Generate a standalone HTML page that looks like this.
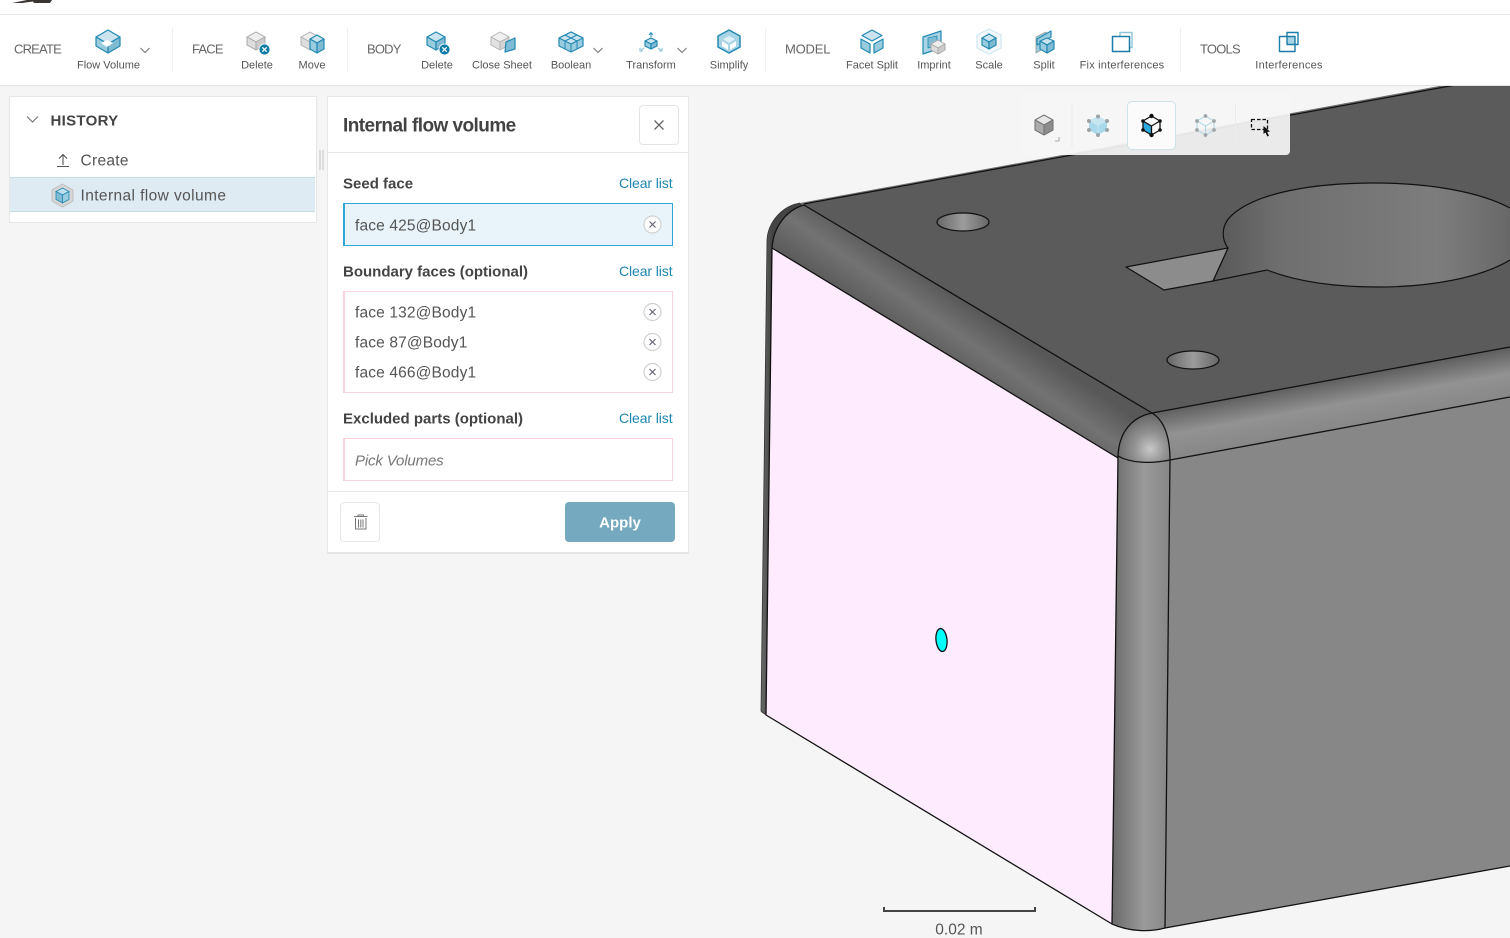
<!DOCTYPE html>
<html><head><meta charset="utf-8"><title>Internal flow volume</title>
<style>
html,body{margin:0;padding:0;width:1510px;height:938px;overflow:hidden;background:#f5f5f5;font-family:"Liberation Sans",sans-serif;color:#555}
.t{position:absolute;white-space:nowrap;line-height:1;transform:translateY(-50%)}
.c{transform:translate(-50%,-50%)}
.r{transform:translate(-100%,-50%)}
.lab{font-size:13px;color:#666;letter-spacing:-.8px}
.sm{font-size:11px;color:#555}
.box{position:absolute;box-sizing:border-box;background:#fff}
.head{font-size:15px;font-weight:bold;color:#444}
.clear{font-size:14px;color:#1e86b0;letter-spacing:-.1px}
.item{font-size:15.5px;color:#555;letter-spacing:.15px}
svg{position:absolute;left:0;top:0}
</style></head><body>

<!-- 3D model -->
<svg width="1510" height="938" viewBox="0 0 1510 938">
<defs>
<linearGradient id="gl" gradientUnits="userSpaceOnUse" x1="978" y1="310" x2="942" y2="362"><stop offset="0" stop-color="#585858"/><stop offset=".5" stop-color="#737373"/><stop offset="1" stop-color="#5c5c5c"/></linearGradient>
<linearGradient id="gr" gradientUnits="userSpaceOnUse" x1="1340" y1="378" x2="1349" y2="428"><stop offset="0" stop-color="#5e5e5e"/><stop offset=".5" stop-color="#929292"/><stop offset="1" stop-color="#878787"/></linearGradient>
<linearGradient id="gv" gradientUnits="userSpaceOnUse" x1="1114" y1="0" x2="1168" y2="0"><stop offset="0" stop-color="#6d6d6d"/><stop offset=".55" stop-color="#9a9a9a"/><stop offset="1" stop-color="#878787"/></linearGradient>
<radialGradient id="gs" gradientUnits="userSpaceOnUse" cx="1150" cy="449" r="34"><stop offset="0" stop-color="#c8c8c8"/><stop offset=".45" stop-color="#949494"/><stop offset="1" stop-color="#686868"/></radialGradient>
<linearGradient id="gh" gradientUnits="userSpaceOnUse" x1="1223" y1="0" x2="1510" y2="0"><stop offset="0" stop-color="#5b5b5b"/><stop offset=".2" stop-color="#6f6f6f"/><stop offset=".75" stop-color="#7d7d7d"/><stop offset="1" stop-color="#686868"/></linearGradient>
<linearGradient id="h1" x1="0" y1="0" x2="1" y2="0"><stop offset="0" stop-color="#666"/><stop offset=".5" stop-color="#9c9c9c"/><stop offset="1" stop-color="#666"/></linearGradient>
<linearGradient id="gs2" gradientUnits="userSpaceOnUse" x1="761" y1="0" x2="772" y2="0"><stop offset="0" stop-color="#6a6a6a"/><stop offset="1" stop-color="#444"/></linearGradient>
</defs>
<!-- silhouette back strip -->
<path d="M800 203 C782 206 768 222 767 240 L761 712 L767 716 L772 248 C773 228 786 210 804 205 Z" fill="url(#gs2)"/>
<path d="M800 203 L1450 84 L1510 73 L1510 90 L804 207 Z" fill="#6e6e6e"/>
<!-- top face -->
<polygon points="804,205 1450,86 1510,75 1510,347 1152,413" fill="#5b5b5b"/>
<!-- left fillet band -->
<path d="M804 205 L1152 413 C1135 417 1120 432 1118 458 L772 248 C773 228 786 210 804 205 Z" fill="url(#gl)"/>
<!-- pink face -->
<polygon points="772,248 1118,458 1112,924 766,715" fill="#feebfe"/>
<!-- right face -->
<polygon points="1170,460 1510,397 1510,866 1165,928" fill="#878787"/>
<!-- right fillet band -->
<path d="M1152 413 L1510 347 L1510 397 L1170 460 C1170 440 1165 420 1152 413 Z" fill="url(#gr)"/>
<!-- vertical fillet -->
<path d="M1118 456 C1130 463 1150 464 1170 460 L1165 928 C1150 932 1130 932 1112 923 Z" fill="url(#gv)"/>
<!-- corner sphere -->
<path d="M1152 413 C1132 417 1119 432 1118 456 C1130 463 1150 464 1170 460 C1170 438 1165 421 1152 413 Z" fill="url(#gs)"/>
<!-- big hole -->
<path d="M1228 248 C1222 240 1220 226 1232 215 C1258 192 1315 183 1375 183 C1430 183 1480 192 1510 208 L1510 260 C1480 278 1430 287 1378 287 C1340 287 1300 283 1267 270 L1213 281 Z" fill="url(#gh)"/>
<path d="M1510 208 C1480 192 1430 183 1375 183 C1315 183 1258 192 1232 215 C1220 226 1222 240 1228 248 L1213 281 M1213 281 L1267 270 C1300 283 1340 287 1378 287 C1430 287 1480 278 1510 260" fill="none" stroke="#111" stroke-width="1.2"/>
<!-- notch -->
<polygon points="1126,267 1228,248 1213,281 1164,290" fill="#8c8c8c" stroke="#111" stroke-width="1.2" stroke-linejoin="round"/>
<!-- small holes -->
<ellipse cx="963" cy="222" rx="26" ry="9" fill="url(#h1)" stroke="#111" stroke-width="1.2"/>
<ellipse cx="1193" cy="360" rx="26" ry="9" fill="url(#h1)" stroke="#111" stroke-width="1.2"/>
<!-- edges -->
<g fill="none" stroke="#111" stroke-width="1.3" stroke-linejoin="round">
<path d="M804 204 L1450 86 L1510 75"/>
<path d="M804 205 L1152 413 L1510 347"/>
<path d="M772 248 L1118 458"/>
<path d="M772 248 C773 228 786 210 804 205"/>
<path d="M772 248 L766 715 L1112 924"/>
<path d="M766 715 L761 711 L767 240 C768 222 782 206 800 203" stroke-width=".8" stroke="#333"/>
<path d="M1152 413 C1132 417 1119 432 1118 456 C1130 463 1150 464 1170 460 C1170 438 1165 421 1152 413"/>
<path d="M1118 456 L1112 924 C1130 932 1150 932 1165 928 L1170 460 L1510 397"/>
<path d="M1165 928 L1510 866"/>
</g>
<ellipse cx="941.500" cy="640" rx="5.500" ry="11.500" transform="rotate(-6 941.500 640)" fill="#00ffff" stroke="#111" stroke-width="1.300"/>
</svg>

<!-- scale -->
<div class="box" style="left:883px;top:910px;width:153px;height:2px;background:#444"></div>
<div class="box" style="left:883px;top:907px;width:2px;height:5px;background:#444"></div>
<div class="box" style="left:1034px;top:907px;width:2px;height:5px;background:#444"></div>
<span class="t c" style="left:959px;top:929.500px;font-size:15.500px;color:#555">0.02 m</span>

<!-- viewer toolbar -->
<div class="box" style="left:1022px;top:92px;width:268px;height:63px;background:rgba(245,245,245,.93);border-radius:0 0 4px 4px"></div>
<div class="box" style="left:1127px;top:101px;width:49px;height:49px;background:#fbfbfb;border:1px solid #cfe2ea;border-radius:5px"></div>
<svg width="1510" height="938" viewBox="0 0 1510 938">
<path d="M1072 104V148M1235.500 104V148" stroke="#ececec" stroke-width="1"/>
<g stroke-linejoin="round">
<polygon points="1044,115 1053,120 1044,125 1035,120" fill="#e6e6e6" stroke="#777" stroke-width="1.100"/>
<polygon points="1035,120 1044,125 1044,135 1035,130" fill="#ababab" stroke="#777" stroke-width="1.100"/>
<polygon points="1053,120 1044,125 1044,135 1053,130" fill="#8d8d8d" stroke="#777" stroke-width="1.100"/>
<path d="M1055 141H1059V137" fill="none" stroke="#aaa"/>
<polygon points="1098,116 1107,121 1107,130 1098,135 1089,130 1089,121" fill="#a9d8ea"/>
<polygon points="1098,116 1107,121 1098,126 1089,121" fill="#c6e6f2"/>
<path d="M1098 126V135" stroke="#d5edf6" stroke-width=".8"/>
<g fill="#9aa4a8"><circle cx="1098" cy="116.500" r="2"/><circle cx="1107" cy="121" r="2"/><circle cx="1107" cy="130" r="2"/><circle cx="1098" cy="135" r="2"/><circle cx="1089" cy="130" r="2"/><circle cx="1089" cy="121" r="2"/></g>
<polygon points="1143,121 1151.500,126 1151.500,135 1143,130" fill="#2ba8dc"/>
<polygon points="1151.500,116 1160,121 1160,130 1151.500,135 1143,130 1143,121" fill="none" stroke="#111" stroke-width="1.300"/>
<path d="M1143 121L1151.500 126L1160 121M1151.500 126V135" fill="none" stroke="#111" stroke-width="1.300"/>
<g fill="#111"><circle cx="1151.500" cy="116" r="2.200"/><circle cx="1160" cy="121" r="1.800"/><circle cx="1160" cy="130" r="1.800"/><circle cx="1151.500" cy="135" r="2.200"/><circle cx="1143" cy="130" r="1.800"/><circle cx="1143" cy="121" r="1.800"/></g>
<polygon points="1205.500,116 1214,121 1214,130 1205.500,135 1197,130 1197,121" fill="none" stroke="#a9d4e4" stroke-width="1"/>
<path d="M1197 121L1205.500 126L1214 121M1205.500 126V135" fill="none" stroke="#a9d4e4"/>
<g fill="#a0a6a8"><circle cx="1205.500" cy="116" r="1.900"/><circle cx="1214" cy="121" r="1.900"/><circle cx="1214" cy="130" r="1.900"/><circle cx="1205.500" cy="135" r="1.900"/><circle cx="1197" cy="130" r="1.900"/><circle cx="1197" cy="121" r="1.900"/></g>
<rect x="1251.500" y="119.500" width="16" height="10" fill="none" stroke="#111" stroke-width="1.300" stroke-dasharray="3.500 2"/>
<path d="M1263.500 126 L1263.500 134 L1265.500 132.500 L1267.300 136.500 L1269 135.800 L1267.200 132 L1270 131.500 Z" fill="#111"/>
</g>
</svg>

<!-- top toolbar -->
<div class="box" style="left:0;top:0;width:1510px;height:86px;background:#fff;border-bottom:1px solid #e2e2e2"></div>
<div class="box" style="left:0;top:14px;width:1510px;height:1px;background:#e6e6e6"></div>
<svg width="1510" height="86" viewBox="0 0 1510 86">
<path d="M12 3 L27 0 H52 L50 3 H34 L33 1.500 L22 3 Z" fill="#3a3532"/>
<path d="M172.500 28V72M347.500 28V72M765.500 28V72M1180.500 28V72" stroke="#efefef"/>
<g fill="none" stroke="#777" stroke-width="1.100"><path d="M140.500 48L145 52.500L149.500 48"/><path d="M593.500 48L598 52.500L602.500 48"/><path d="M677.500 48L682 52.500L686.500 48"/></g>
<g stroke-linejoin="round" stroke-width="1.200" stroke="#2289b2">
<!-- flow volume -->
<polygon points="108,30 120,37 108,44 96,37" fill="#cbe4ef"/>
<polygon points="96,37 108,44 108,53 96,46" fill="#9accdf"/>
<polygon points="120,37 108,44 108,53 120,46" fill="#7fbbd3"/>
<path d="M101 43L107 40L113 43L107 47Z" fill="#fff" stroke="none"/>
<!-- face delete -->
<g stroke="#a8a8a8" stroke-width="1"><polygon points="256,32 265,37 256,42 247,37" fill="#eee"/><polygon points="247,37 256,42 256,50 247,45" fill="#ddd"/><polygon points="265,37 256,42 256,50 265,45" fill="#ccc"/></g>
<circle cx="264.500" cy="49.500" r="5.500" fill="#0c7ba8" stroke="#fff" stroke-width=".8"/><path d="M262.300 47.300L266.700 51.700M266.700 47.300L262.300 51.700" stroke="#fff" stroke-width="1.300"/>
<!-- move -->
<g stroke="#b0b0b0" stroke-width="1"><polygon points="310,32 319,37 310,42 301,37" fill="#eee"/><polygon points="301,37 310,42 310,50 301,45" fill="#ddd"/></g>
<polygon points="317,35 324,39 317,43 310,39" fill="#cbe4ef"/><polygon points="310,39 317,43 317,53 310,49" fill="#9accdf"/><polygon points="324,39 317,43 317,53 324,49" fill="#7fbbd3"/>
<!-- body delete -->
<polygon points="436,32 445,37 436,42 427,37" fill="#cbe4ef"/><polygon points="427,37 436,42 436,50 427,45" fill="#9accdf"/><polygon points="445,37 436,42 436,50 445,45" fill="#7fbbd3"/>
<circle cx="444.500" cy="49.500" r="5.500" fill="#0c7ba8" stroke="#fff" stroke-width=".8"/><path d="M442.300 47.300L446.700 51.700M446.700 47.300L442.300 51.700" stroke="#fff" stroke-width="1.300"/>
<!-- close sheet -->
<g stroke="#b4b4b4" stroke-width="1"><polygon points="500,32 509,37 500,42 491,37" fill="#f0f0f0"/><polygon points="491,37 500,42 500,50 491,45" fill="#e2e2e2"/><polygon points="509,37 500,42 500,50 509,45" fill="#d4d4d4"/></g>
<path d="M506 42 L515 38 L515 49 L505 52 Z" fill="#7fbdd6"/>
<!-- boolean -->
<polygon points="571,32 583,38 583,46 571,52 559,46 559,38" fill="#9accdf"/><polygon points="571,32 583,38 571,44 559,38" fill="#cbe4ef"/><path d="M571 44V52M565 35L577 41V49M577 35L565 41V49" fill="none" stroke-width="1"/>
<!-- transform -->
<polygon points="651,38 657,41 651,44 645,41" fill="#cbe4ef"/><polygon points="645,41 651,44 651,49 645,46" fill="#9accdf"/><polygon points="657,41 651,44 651,49 657,46" fill="#7fbbd3"/>
<path d="M651 37V33M649 35L651 32.500L653 35" fill="none" stroke-width="1"/>
<path d="M644 48L641 50M643 51H640V48M658 48L661 50M659 51H662V48" fill="none" stroke="#7fbdd6" stroke-width="1"/>
<!-- simplify -->
<polygon points="729,30 740,36 740,47 729,53 718,47 718,36" fill="#a9d4e5" stroke-width="1.500"/>
<polygon points="729,36 735,39 729,43 723,39" fill="#dff0f6" stroke="none"/><polygon points="722,41 728,45 728,50 722,46" fill="#fff" stroke="none"/><polygon points="736,41 730,45 730,50 736,46" fill="#fff" stroke="none"/>
<!-- facet split -->
<polygon points="872,30 882,35.500 872,41 862,35.500" fill="#cbe4ef"/><polygon points="861,39 870,44 870,53 861,48" fill="#9accdf"/><polygon points="883,39 874,44 874,53 883,48" fill="#9accdf"/>
<!-- imprint -->
<polygon points="923,37 941,31 941,48 923,54" fill="#a9d4e5"/><polygon points="928,38 937,36 937,45 928,48" fill="#7fbbd3" stroke-width=".8"/>
<g stroke="#aaa" stroke-width="1"><polygon points="938,40 945,44 938,48 931,44" fill="#eee"/><polygon points="931,44 938,48 938,54 931,50" fill="#ddd"/><polygon points="945,44 938,48 938,54 945,50" fill="#ccc"/></g>
<!-- scale -->
<polygon points="989,29 1001,35 1001,48 989,54 977,48 977,35" fill="#f4fafc" stroke="#cfe6ef" stroke-width="1.200"/>
<polygon points="989,34 996,38 989,42 982,38" fill="#cbe4ef"/><polygon points="982,38 989,42 989,49 982,45" fill="#9accdf"/><polygon points="996,38 989,42 989,49 996,45" fill="#7fbbd3"/>
<!-- split -->
<polygon points="1036,37 1046,32 1046,47 1036,53" fill="#9accdf" stroke="#999" stroke-width=".8"/><polygon points="1037,39 1051,31 1051,37 1037,45" fill="#9accdf"/><polygon points="1047,38 1054,41 1047,45 1040,41" fill="#cbe4ef"/><polygon points="1040,41 1047,45 1047,53 1040,49" fill="#9accdf"/><polygon points="1054,41 1047,45 1047,53 1054,49" fill="#7fbbd3"/>
<!-- fix interferences -->
<path d="M1120 36V32.500H1132V47.500H1130" fill="none" stroke="#8fc5da" stroke-width="1.400"/>
<rect x="1112.500" y="36.500" width="17" height="15" fill="#fff" stroke="#1a7ea8" stroke-width="1.500"/>
<!-- interferences -->
<rect x="1287" y="36.500" width="8" height="8" fill="#a9d4e5" stroke="none"/>
<rect x="1279.500" y="36.500" width="15.500" height="15" fill="none" stroke="#1a7ea8" stroke-width="1.400"/>
<rect x="1287" y="32.500" width="11" height="12" fill="none" stroke="#1a7ea8" stroke-width="1.400"/>
</g>
</svg>
<span class="t lab" style="left:14px;top:49px">CREATE</span>
<span class="t lab" style="left:192px;top:49px">FACE</span>
<span class="t lab" style="left:367px;top:49px">BODY</span>
<span class="t lab" style="left:785px;top:49px;letter-spacing:-.2px">MODEL</span>
<span class="t lab" style="left:1200px;top:49px">TOOLS</span>
<span class="t c sm" style="left:108.500px;top:66px">Flow Volume</span>
<span class="t c sm" style="left:257px;top:66px">Delete</span>
<span class="t c sm" style="left:312px;top:66px">Move</span>
<span class="t c sm" style="left:437px;top:66px">Delete</span>
<span class="t c sm" style="left:502px;top:66px">Close Sheet</span>
<span class="t c sm" style="left:571px;top:66px">Boolean</span>
<span class="t c sm" style="left:651px;top:66px">Transform</span>
<span class="t c sm" style="left:729px;top:66px">Simplify</span>
<span class="t c sm" style="left:872px;top:66px">Facet Split</span>
<span class="t c sm" style="left:934px;top:66px">Imprint</span>
<span class="t c sm" style="left:989px;top:66px">Scale</span>
<span class="t c sm" style="left:1044px;top:66px">Split</span>
<span class="t c sm" style="left:1122px;top:66px;letter-spacing:.2px">Fix interferences</span>
<span class="t c sm" style="left:1289px;top:66px;letter-spacing:.25px">Interferences</span>

<!-- history panel -->
<div class="box" style="left:9px;top:96px;width:308px;height:127px;border:1px solid #e6e6e6"></div>
<div class="box" style="left:10px;top:177px;width:305px;height:35px;background:#deebf3;border-top:1px solid #c6dce7;border-bottom:1px solid #c6dce7"></div>
<div class="box" style="left:319px;top:150px;width:1.500px;height:20px;background:#ddd"></div>
<div class="box" style="left:322px;top:150px;width:1.500px;height:20px;background:#ddd"></div>
<svg width="340" height="230" viewBox="0 0 340 230">
<path d="M27 116.500L32.500 122L38 116.500" fill="none" stroke="#777" stroke-width="1.200"/>
<path d="M63 165V155M59 158.500L63 154.500L67 158.500M57 166.500H69" fill="none" stroke="#555" stroke-width="1.100"/>
<polygon points="62.500,184 73,190 73,201 62.500,207 52,201 52,190" fill="#d6d6d6" stroke="#bdbdbd"/>
<polygon points="62.500,188 69,191.500 62.500,195 56,191.500" fill="#bfe0ee" stroke="#2289b2" stroke-width=".8"/>
<polygon points="56,191.500 62.500,195 62.500,203 56,199.500" fill="#7fbbd3" stroke="#2289b2" stroke-width=".8"/>
<polygon points="69,191.500 62.500,195 62.500,203 69,199.500" fill="#9accdf" stroke="#2289b2" stroke-width=".8"/>
</svg>
<span class="t" style="left:50.500px;top:121px;font-size:15px;font-weight:bold;color:#444;letter-spacing:.3px">HISTORY</span>
<span class="t" style="left:80.500px;top:161px;font-size:15.500px;color:#555;letter-spacing:.3px">Create</span>
<span class="t" style="left:80.500px;top:196px;font-size:15.500px;color:#555;letter-spacing:.4px">Internal flow volume</span>

<!-- main panel -->
<div class="box" style="left:327px;top:96px;width:362px;height:458px;border:1px solid #e6e6e6"></div>
<div class="box" style="left:328px;top:152px;width:360px;height:1px;background:#e6e6e6"></div>
<div class="box" style="left:328px;top:491px;width:360px;height:1px;background:#e6e6e6"></div>
<div class="box" style="left:328px;top:552px;width:360px;height:1px;background:#e6e6e6"></div>
<div class="box" style="left:639px;top:105px;width:40px;height:40px;border:1px solid #e4e4e4;border-radius:4px"></div>
<span class="t" style="left:343px;top:126px;font-size:19px;font-weight:bold;color:#434343;letter-spacing:-.55px">Internal flow volume</span>

<span class="t head" style="left:343px;top:184px">Seed face</span>
<span class="t clear r" style="left:672.500px;top:182.500px">Clear list</span>
<div class="box" style="left:343px;top:203px;width:330px;height:43px;background:#e8f4fa;border:1px solid #2fa8d8;border-left-width:2px"></div>
<span class="t item" style="left:355px;top:226px">face 425@Body1</span>

<span class="t head" style="left:343px;top:272px">Boundary faces (optional)</span>
<span class="t clear r" style="left:672.500px;top:270.500px">Clear list</span>
<div class="box" style="left:343px;top:291px;width:330px;height:102px;border:1px solid #f9d3da;border-left-width:2px"></div>
<span class="t item" style="left:355px;top:313px">face 132@Body1</span>
<span class="t item" style="left:355px;top:343px">face 87@Body1</span>
<span class="t item" style="left:355px;top:373px">face 466@Body1</span>

<span class="t head" style="left:343px;top:419px">Excluded parts (optional)</span>
<span class="t clear r" style="left:672.500px;top:417.500px">Clear list</span>
<div class="box" style="left:343px;top:438px;width:330px;height:43px;border:1px solid #f9d3da;border-left-width:2px"></div>
<span class="t" style="left:355px;top:461px;font-size:15px;font-style:italic;color:#777;letter-spacing:-.15px">Pick Volumes</span>

<div class="box" style="left:340px;top:502px;width:40px;height:40px;border:1px solid #e6e6e6;border-radius:4px"></div>
<div class="box" style="left:565px;top:502px;width:110px;height:40px;background:#74a9c0;border-radius:4px"></div>
<span class="t c" style="left:620px;top:523px;font-size:15px;font-weight:bold;color:#fff">Apply</span>

<svg width="700" height="560" viewBox="0 0 700 560">
<path d="M654.500 120.500L663.500 129.500M663.500 120.500L654.500 129.500" stroke="#666" stroke-width="1.300"/>
<g fill="#fff" stroke="#d0d0d0" stroke-width="1.200">
<circle cx="652.500" cy="224.500" r="8.500"/><circle cx="652.500" cy="312" r="8.500"/><circle cx="652.500" cy="342" r="8.500"/><circle cx="652.500" cy="372" r="8.500"/>
</g>
<g stroke="#667" stroke-width="1.200">
<path d="M649.500 221.500L655.500 227.500M655.500 221.500L649.500 227.500"/>
<path d="M649.500 309L655.500 315M655.500 309L649.500 315"/>
<path d="M649.500 339L655.500 345M655.500 339L649.500 345"/>
<path d="M649.500 369L655.500 375M655.500 369L649.500 375"/>
</g>
<path d="M354 516.500H367.500M358 516.500V515H363.500V516.500M355.500 518V529H366V518M358.500 519.500V527.500M360.800 519.500V527.500M363 519.500V527.500" fill="none" stroke="#777" stroke-width="1"/>
</svg>
</body></html>
